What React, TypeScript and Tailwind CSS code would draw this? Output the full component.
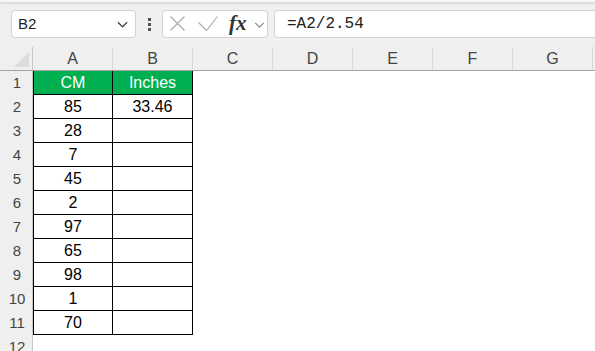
const rows: [string, string][] = [
  ["85", "33.46"],
  ["28", ""],
  ["7", ""],
  ["45", ""],
  ["2", ""],
  ["97", ""],
  ["65", ""],
  ["98", ""],
  ["1", ""],
  ["70", ""],
];

const cols = ["A", "B", "C", "D", "E", "F", "G"];

function Chevron({ className }: { className: string }) {
  return (
    <svg className={className} viewBox="0 0 12 7" fill="none" stroke="currentColor" strokeWidth="1.3">
      <path d="M1 1l5 5 5-5" />
    </svg>
  );
}

function FormulaBar() {
  return (
    <div className="flex items-center h-[28px] mt-[7px] pl-[11px]">
      <div className="flex items-center w-[125px] h-[28px] shrink-0 rounded-[4px] border border-[#d2d2d2] bg-white pl-[6px] pr-[7px]">
        <span className="text-[15px] text-[#222]">B2</span>
        <Chevron className="ml-auto w-[11px] h-[7px] text-[#444]" />
      </div>
      <div className="flex flex-col items-center justify-center gap-[2px] w-[26px] shrink-0">
        <span className="w-[3px] h-[3px] bg-[#555]" />
        <span className="w-[3px] h-[3px] bg-[#555]" />
        <span className="w-[3px] h-[3px] bg-[#555]" />
      </div>
      <div className="relative w-[106px] h-[28px] shrink-0 rounded-[4px] border border-[#d2d2d2] bg-white">
        <svg className="absolute left-[7px] top-[5px] w-[15px] h-[15px]" viewBox="0 0 15 15" stroke="#a9a9a9" strokeWidth="1.1" fill="none">
          <path d="M0.5 0.5l14 14M14.5 0.5l-14 14" />
        </svg>
        <svg className="absolute left-[35px] top-[5px] w-[20px] h-[15px]" viewBox="0 0 20 15" stroke="#a9a9a9" strokeWidth="1.1" fill="none">
          <path d="M0.5 6.5l8 8L19.5 0.5" />
        </svg>
        <span className="absolute left-[66px] top-[0px] font-['Liberation_Serif'] italic font-bold text-[21px] leading-[24px] text-[#333]">
          fx
        </span>
        <Chevron className="absolute left-[91px] top-[11px] w-[11px] h-[6px] text-[#8a8a8a]" />
      </div>
      <div className="ml-[6px] w-[340px] h-[28px] shrink-0 rounded-l-[4px] border border-[#d2d2d2] bg-white pl-[12px] flex items-center">
        <span className="font-['Liberation_Mono'] text-[16px] text-[#222]">=A2/2.54</span>
      </div>
    </div>
  );
}

function Row({ num, children }: { num: string; children?: React.ReactNode }) {
  return (
    <div className="flex h-[24px] text-[16px]">
      <div className="w-[33px] shrink-0 bg-[#efefef] border-r border-[#c8c8c8] flex items-center justify-center pl-[2px] text-[#444] text-[15px]">
        {num}
      </div>
      {children}
    </div>
  );
}

function Sheet() {
  return (
    <div className="mt-[9px]">
      <div className="flex h-[24px] bg-[#efefef] border-b border-[#a3a3a3]">
        <div className="relative w-[33px] shrink-0 border-r border-[#c8c8c8]">
          <svg className="absolute right-[3px] bottom-[3px] w-[15px] h-[15px]" viewBox="0 0 15 15">
            <path d="M15 0V15H0Z" fill="#dcdcdc" />
          </svg>
        </div>
        {cols.map((c) => (
          <div
            key={c}
            className="w-[80px] shrink-0 border-r border-[#d8d8d8] flex items-center justify-center text-[16px] text-[#444]"
          >
            {c}
          </div>
        ))}
      </div>
      <div className="bg-white">
        <Row num="1">
          <div className="w-[80px] shrink-0 bg-[#00b050] border-l border-r border-b border-black flex items-center justify-center text-white">
            CM
          </div>
          <div className="w-[80px] shrink-0 bg-[#00b050] border-r border-b border-black flex items-center justify-center text-white">
            Inches
          </div>
        </Row>
        {rows.map(([cm, inch], i) => (
          <Row key={i} num={String(i + 2)}>
            <div className="w-[80px] shrink-0 border-l border-r border-b border-black flex items-center justify-center text-black">
              {cm}
            </div>
            <div className="w-[80px] shrink-0 border-r border-b border-black flex items-center justify-center text-black">
              {inch}
            </div>
          </Row>
        ))}
        <Row num="12" />
      </div>
    </div>
  );
}

export default function App() {
  return (
    <div className="w-[595px] h-[351px] overflow-hidden bg-[#f0f0f0] font-['Liberation_Sans',sans-serif]">
      <div className="h-[3px] bg-[#f7f7f7] border-b border-[#dcdcdc] shadow-[0_1px_2px_rgba(0,0,0,0.08)]" />
      <FormulaBar />
      <Sheet />
    </div>
  );
}
